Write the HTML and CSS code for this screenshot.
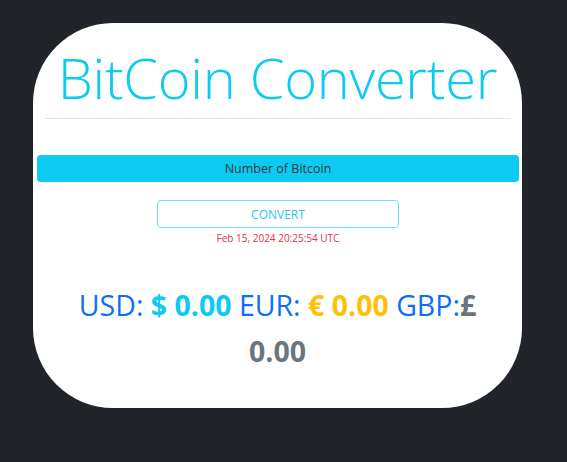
FILE: index.html
```html
<!DOCTYPE html>
<html>
<head>
<meta charset="utf-8">
<link rel="stylesheet" href="styles.css">
</head>
<body>
<div class="card">
  <h1 class="title">BitCoin Converter</h1>
  <hr class="rule">
  <div class="form">
    <input class="amount" type="text" placeholder="Number of Bitcoin">
    <button class="convert">CONVERT</button>
    <div class="stamp">Feb 15, 2024 20:25:54 UTC</div>
  </div>
  <div class="result">
    <span class="label">USD:</span> <b class="usd">$ 0.00</b> <span class="label">EUR:</span> <b class="eur">€ 0.00</b> <span class="label">GBP:</span><b class="gbp">£ 0.00</b>
  </div>
</div>
</body>
</html>
```
FILE: styles.css
```css
html, body {
  margin: 0;
  padding: 0;
  background: #212529;
  font-family: "Open Sans", "Noto Sans", sans-serif;
}
body {
  padding: 23px 0 0 33px;
  height: 462px;
  box-sizing: border-box;
}
.card {
  width: 489px;
  height: 385px;
  background: #fff;
  border-radius: 80px;
  box-sizing: border-box;
  padding: 0 12px;
  display: flex;
  flex-direction: column;
}
.title {
  margin: 18px 0 0;
  font-weight: 300;
  font-size: 56px;
  line-height: 72px;
  color: #0dcaf0;
  text-align: center;
  letter-spacing: -0.3px;
}
.rule {
  margin: 5px 0 0;
  border: 0;
  border-top: 1px solid #e6e6e6;
}
.form {
  display: flex;
  flex-direction: column;
  align-items: center;
  margin: 36px -9px 0 -8px;
}
.amount {
  width: 100%;
  height: 27px;
  box-sizing: border-box;
  border: 0;
  border-radius: 4px;
  background: #0dcaf0;
  text-align: center;
  font-family: inherit;
  font-size: 12.5px;
  outline: none;
}
.amount::placeholder {
  color: #343a40;
}
.convert {
  margin-top: 18px;
  width: 242px;
  height: 28px;
  background: #fff;
  border: 1px solid #6edff6;
  border-radius: 4px;
  color: #2fc6f0;
  font-family: inherit;
  font-size: 12px;
}
.stamp {
  margin-top: 3px;
  font-size: 10px;
  color: #dc3545;
}
.result {
  margin: 37px 16px 0;
  text-align: center;
  font-size: 28.5px;
  line-height: 46px;
}
.label {
  color: #0d6efd;
}
.usd {
  color: #0dcaf0;
}
.eur {
  color: #ffc107;
}
.gbp {
  color: #6c757d;
}
```
